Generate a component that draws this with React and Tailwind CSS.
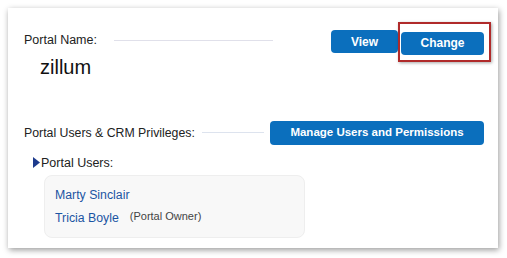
export default function App() {
  return (
    <div className="w-[507px] h-[258px] bg-white p-2 font-['Liberation_Sans',Arial,sans-serif]">
      <div className="relative w-[490px] h-[240px] bg-white shadow-[1px_2px_6px_rgba(0,0,0,0.4)] pl-4 pr-[14px] pt-[22px]">
        {/* Portal name */}
        <div className="flex items-start justify-between">
          <div className="flex items-center pt-[2px]">
            <span className="text-[12.5px] text-[#222] leading-[16px]">Portal Name:</span>
            <span className="ml-[17px] w-[159px] h-px bg-[#e0e0ea]" />
          </div>
          <div className="flex gap-[3px]">
            <button className="w-[67px] h-[23px] rounded-[4px] bg-[#0b6fbd] text-white text-[12px] font-bold">
              View
            </button>
            <div className="relative">
              <button className="w-[83px] h-[23px] rounded-[4px] bg-[#0b6fbd] text-white text-[12px] font-bold">
                Change
              </button>
              <div className="absolute -left-[3px] -right-[7px] -top-[8px] -bottom-[7px] border-2 border-[#b02a2a] shadow-[1px_1px_3px_rgba(0,0,0,0.35)]" />
            </div>
          </div>
        </div>
        <div className="ml-4 mt-0 text-[20px] leading-[24px] text-[#111]">
          zillum
        </div>

        {/* Users & privileges */}
        <div className="flex items-center mt-[42px]">
          <span className="text-[12.3px] text-[#222] leading-[16px]">Portal Users &amp; CRM Privileges:</span>
          <span className="ml-[7px] flex-1 h-px bg-[#dde3ee]" />
          <button className="ml-[6px] w-[214px] h-[24px] rounded-[4px] bg-[#0b6fbd] text-white text-[11.5px] font-bold">
            Manage Users and Permissions
          </button>
        </div>

        <div className="flex items-center ml-[9px] mt-[10px]">
          <svg width="7" height="11" viewBox="0 0 7 11" className="mr-px">
            <path d="M0 0 L7 5.5 L0 11 Z" fill="#1d3a8c" />
          </svg>
          <span className="text-[12.5px] text-[#222] leading-[16px]">Portal Users:</span>
        </div>

        <div className="ml-[20px] mt-[4px] w-[261px] h-[63px] rounded-[8px] bg-[#f8f8f8] border border-[#eeeeee] pl-[10px] pt-[11px]">
          <div className="text-[12.3px] leading-[16px] text-[#1b55a3]">Marty Sinclair</div>
          <div className="flex items-baseline mt-[7px]">
            <span className="text-[12.3px] leading-[16px] text-[#1b55a3]">Tricia Boyle</span>
            <span className="ml-[11px] text-[11px] text-[#444] relative -top-[2px]">(Portal Owner)</span>
          </div>
        </div>
      </div>
    </div>
  );
}
